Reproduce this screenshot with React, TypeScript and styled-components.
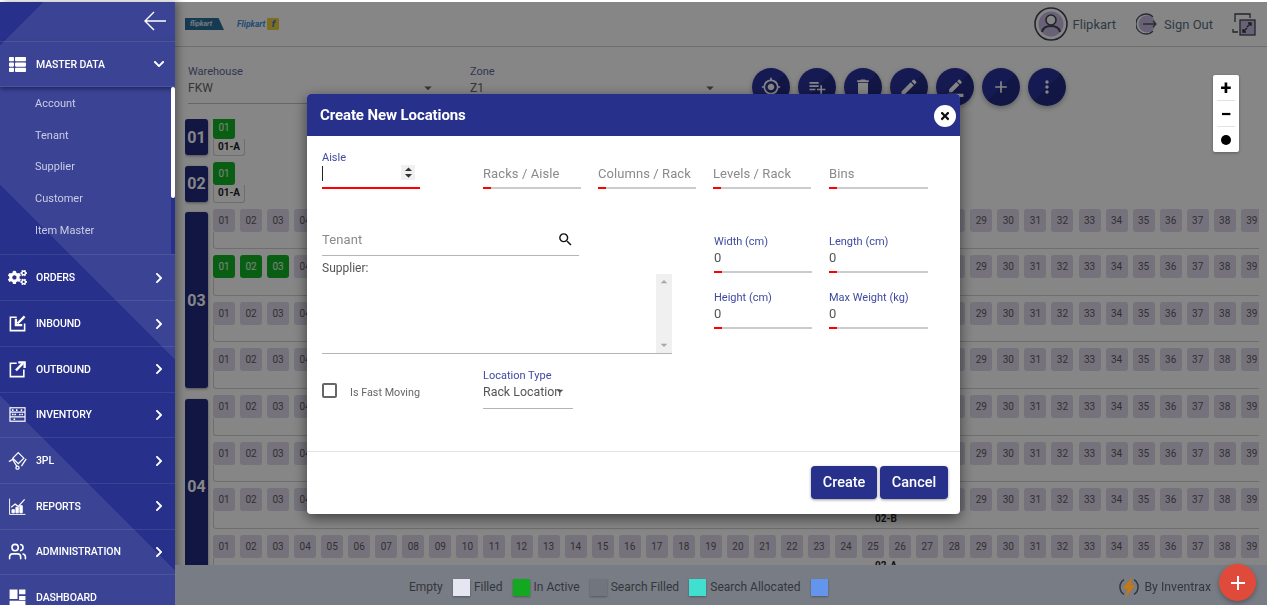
import React from "react";
import styled, { createGlobalStyle } from "styled-components";
import {
  MdAdd,
  MdBorderColor,
  MdDelete,
  MdEdit,
  MdGpsFixed,
  MdMoreVert,
  MdPlaylistAdd,
  MdSearch,
  MdArrowDropDown,
  MdArrowDropUp,
} from "react-icons/md";
import { FaChevronDown, FaChevronRight, FaCogs, FaThList, FaTimes } from "react-icons/fa";
import { LuUsers } from "react-icons/lu";

const GlobalStyle = createGlobalStyle`
  html, body {
    margin: 0;
    height: 100%;
    overflow: hidden;
    background: #fff;
    font-family: Roboto, "Liberation Sans", sans-serif;
  }
  * { box-sizing: border-box; }
`;

const Shell = styled.div`
  display: flex;
  width: 1267px;
  height: 605px;
  padding-top: 2px;
  overflow: hidden;
`;

/* ---------- sidebar ---------- */

const Sidebar = styled.aside`
  position: relative;
  z-index: 40;
  flex: 0 0 175px;
  height: 603px;
  overflow: hidden;
  color: #fff;
  box-shadow: 3px 0 8px rgba(0, 0, 0, 0.35);
  background:
    linear-gradient(135deg, #27308a 31px, transparent 31px),
    linear-gradient(45deg, #3b4494 148px, #27308a 148px, #27308a 297px, #3b4494 297px);
`;

const SideHead = styled.div`
  display: flex;
  justify-content: flex-end;
  align-items: center;
  height: 39.8px;
  padding-right: 8px;
  border-bottom: 1px solid rgba(255, 255, 255, 0.12);
`;

const MenuRow = styled.div<{ $open?: boolean }>`
  display: flex;
  align-items: center;
  height: 45.7px;
  padding: 0 10px 0 8px;
  border-bottom: 1px solid rgba(255, 255, 255, 0.09);
  box-shadow: ${(p) => (p.$open ? "0 2px 4px rgba(10, 12, 60, 0.55)" : "none")};
`;

const MenuIcon = styled.span`
  display: flex;
  justify-content: center;
  flex: 0 0 19px;
  margin-right: 9px;
`;

const MenuLabel = styled.span`
  flex: 1;
  font-size: 10.5px;
  font-weight: 500;
  letter-spacing: -0.1px;
`;

const SubMenu = styled.div`
  position: relative;
  height: 168px;
  padding-bottom: 10px;
  border-bottom: 1px solid rgba(255, 255, 255, 0.09);
`;

const SubItem = styled.div`
  display: flex;
  align-items: center;
  height: 31.7px;
  padding-left: 35px;
  font-size: 11px;
  color: #c9cce6;
`;

const SubTrack = styled.div`
  position: absolute;
  top: 0;
  right: 0;
  bottom: 0;
  width: 4px;
  background: #27308a;
`;

const SubThumb = styled.div`
  width: 4px;
  height: 111px;
  border-radius: 2px;
  background: #fff;
`;

/* ---------- main ---------- */

const Main = styled.main`
  display: flex;
  flex-direction: column;
  flex: 1;
  min-width: 0;
  height: 603px;
`;

const TopBar = styled.header`
  display: flex;
  align-items: center;
  flex: 0 0 45px;
  padding: 0 11px 0 10px;
  border-bottom: 1px solid #d4d4d4;
`;

const LogoBadge = styled.span`
  display: flex;
  align-items: center;
  width: 39px;
  height: 12px;
  padding-left: 5px;
  margin-right: 13px;
  font-size: 7px;
  font-style: italic;
  font-weight: 700;
  color: #dfe9ef;
  background: #2a6f9c;
  clip-path: polygon(0 0, 86% 0, 100% 100%, 0 100%);
`;

const LogoWord = styled.span`
  font-size: 8.5px;
  font-style: italic;
  font-weight: 700;
  color: #3f8ede;
`;

const LogoMark = styled.span`
  display: flex;
  align-items: center;
  justify-content: center;
  width: 12px;
  height: 12px;
  margin-left: 2px;
  border-radius: 1px;
  font-size: 9px;
  font-weight: 900;
  font-style: italic;
  color: #2a7fd6;
  background: #f2cf3c;
`;

const TopSpacer = styled.div`
  flex: 1;
`;

const TopText = styled.span`
  font-size: 13px;
  color: #5b6f84;
`;

const UserBlock = styled.div`
  display: flex;
  align-items: center;
  gap: 5px;
  margin-right: 20px;
`;

const SignOutBlock = styled.div`
  display: flex;
  align-items: center;
  gap: 6px;
  margin-right: 19px;
`;

const Toolbar = styled.section`
  display: flex;
  align-items: flex-start;
  gap: 31px;
  flex: 0 0 72px;
  padding: 18px 0 0 13px;
`;

const SelectField = styled.div`
  position: relative;
  width: 251px;
  height: 39px;
  border-bottom: 1px solid #c2c2c2;
`;

const SelectLabel = styled.div`
  font-size: 11px;
  line-height: 13px;
  color: #5f6899;
`;

const SelectValue = styled.div`
  font-size: 12px;
  line-height: 20px;
  color: #666;
`;

const SelectCaret = styled.span`
  position: absolute;
  right: 2px;
  top: 14px;
  display: flex;
  color: #666;
`;

const ActionGroup = styled.div`
  display: flex;
  gap: 8px;
  margin-top: 3px;
`;

const ActionButton = styled.button`
  display: flex;
  align-items: center;
  justify-content: center;
  width: 38px;
  height: 38px;
  padding: 0;
  border: 0;
  border-radius: 50%;
  color: #fff;
  background: linear-gradient(135deg, #2a329c 50%, #232a84 50%);
  box-shadow: 0 2px 5px rgba(0, 0, 0, 0.3);
`;

const ZoomControl = styled.div`
  position: absolute;
  z-index: 40;
  top: 75px;
  left: 1213px;
  display: flex;
  flex-direction: column;
  width: 26px;
  height: 77px;
  padding: 0 4px;
  border-radius: 2px;
  background: #fff;
  box-shadow: 0 1px 3px rgba(0, 0, 0, 0.3);
`;

const ZoomButton = styled.div<{ $last?: boolean }>`
  display: flex;
  align-items: center;
  justify-content: center;
  flex: 1;
  font-size: 20px;
  font-weight: 700;
  line-height: 1;
  color: #000;
  border-bottom: ${(p) => (p.$last ? "0" : "1px solid #e2e2e2")};
`;

const ZoomDot = styled.span`
  width: 10px;
  height: 10px;
  border-radius: 50%;
  background: #000;
`;

const Grid = styled.section`
  flex: 1;
  min-height: 0;
  margin: 0 8px 0 10px;
  overflow: hidden;
`;

const GridInner = styled.div`
  margin-top: -3.5px;
`;

const Aisle = styled.div`
  display: flex;
`;

const AisleLabel = styled.div`
  display: flex;
  align-items: center;
  justify-content: center;
  flex: 0 0 23px;
  margin: 3.5px 5px 7px 0;
  border-radius: 3px;
  font-size: 16px;
  font-weight: 700;
  color: #fff;
  background: #232a80;
  box-shadow: 0 1px 3px rgba(0, 0, 0, 0.4);
`;

const Racks = styled.div`
  display: flex;
  flex-direction: column;
`;

const RackRow = styled.div<{ $short?: boolean }>`
  display: flex;
  flex-direction: column;
  width: ${(p) => (p.$short ? "32px" : "1346px")};
  height: 40.6px;
  margin-bottom: 6px;
`;

const Cells = styled.div`
  display: flex;
  gap: 5.05px;
`;

const Cell = styled.div<{ $on?: boolean }>`
  display: flex;
  align-items: center;
  justify-content: center;
  flex: 0 0 22px;
  height: 23px;
  border-radius: 3px;
  font-size: 10px;
  color: ${(p) => (p.$on ? "#e4ffe8" : "#5f5a64")};
  background: ${(p) => (p.$on ? "#14b426" : "#dedaea")};
`;

const RackName = styled.div`
  flex: 1;
  border: 1px solid #d2d2d2;
  border-top: 0;
  border-radius: 0 0 3px 3px;
  font-size: 10px;
  font-weight: 700;
  line-height: 15px;
  text-align: center;
  color: #222;
`;

const Footer = styled.footer`
  position: relative;
  z-index: 40;
  display: flex;
  align-items: center;
  flex: 0 0 40px;
  padding: 4px 0 0 234px;
  background: #787c84;
  font-size: 12px;
  color: #33363c;
`;

const LegendText = styled.span`
  margin-right: 4px;
`;

const Swatch = styled.span<{ $color: string }>`
  flex: 0 0 17px;
  height: 17px;
  margin-right: 4px;
  margin-left: 6.2px;
  background: ${(p) => p.$color};
  box-shadow: 0 1px 2px rgba(0, 0, 0, 0.3);
`;

const Brand = styled.div`
  display: flex;
  align-items: center;
  gap: 5px;
  margin-left: auto;
  margin-right: 56px;
  font-size: 12.3px;
`;

const Fab = styled.button`
  position: absolute;
  right: 11px;
  top: -1px;
  display: flex;
  align-items: center;
  justify-content: center;
  width: 37px;
  height: 37px;
  padding: 0;
  border: 0;
  border-radius: 50%;
  color: #fff;
  background: #e04a3a;
  box-shadow: 0 2px 5px rgba(0, 0, 0, 0.3);
`;

/* ---------- dialog ---------- */

const DialogLayer = styled.div`
  position: fixed;
  z-index: 30;
  inset: 2px 0 0 0;
  display: flex;
  justify-content: center;
  align-items: flex-start;
  padding-top: 92px;
  background: rgba(0, 0, 0, 0.475);
`;

const Dialog = styled.div`
  position: relative;
  display: flex;
  flex-direction: column;
  width: 653px;
  height: 420px;
  border-radius: 4px;
  overflow: hidden;
  background: #fff;
  box-shadow: 0 4px 14px rgba(0, 0, 0, 0.55);
`;

const DialogHead = styled.div`
  display: flex;
  align-items: center;
  flex: 0 0 42px;
  padding: 0 15px 0 13px;
  font-size: 15px;
  font-weight: 700;
  letter-spacing: -0.1px;
  color: #fff;
  background: #27308a;
`;

const CloseButton = styled.button`
  position: absolute;
  top: 11px;
  right: 4px;
  display: flex;
  align-items: center;
  justify-content: center;
  width: 22px;
  height: 22px;
  padding: 0;
  border: 0;
  border-radius: 50%;
  color: #111;
  background: #fff;
`;

const DialogBody = styled.div`
  flex: 0 0 315px;
  padding: 15px 0 0 15px;
`;

const TopFields = styled.div`
  display: grid;
  grid-template-columns: 144px 98px 98px 99px 99px;
  column-gap: 17px;
`;

const Field = styled.div<{ $tick?: number; $wide?: boolean; $tall?: boolean }>`
  position: relative;
  width: ${(p) => (p.$wide ? "99px" : "98px")};
  height: ${(p) => (p.$tall ? "38px" : "37px")};
  padding-top: ${(p) => (p.$tall && p.$tick ? "1px" : "0")};
  background:
    linear-gradient(#f00, #f00) left bottom / ${(p) => p.$tick ?? 8}px 2px no-repeat,
    linear-gradient(#ccc, #ccc) left bottom / 100% 2px no-repeat;
`;

const FieldLabel = styled.div`
  font-size: 11px;
  line-height: 12px;
  color: #3f4aa0;
`;

const FieldValue = styled.div`
  font-size: 13px;
  line-height: 20px;
  color: #555;
`;

const TypeValue = styled.div`
  font-size: 12.4px;
  line-height: 20px;
  color: #555;
`;

const Placeholder = styled.div`
  padding-top: 15px;
  font-size: 13px;
  line-height: 16px;
  letter-spacing: 0.08px;
  color: #8a8a8a;
`;

const Caret = styled.span`
  display: block;
  width: 1px;
  height: 15px;
  margin-top: 2px;
  background: #222;
`;

const Spinner = styled.span`
  position: absolute;
  top: 14px;
  right: 5px;
  display: flex;
  flex-direction: column;
  align-items: center;
  justify-content: center;
  width: 14px;
  height: 15px;
  background: #f0f0f0;
  color: #333;
`;

const SpinIcon = styled.span`
  display: flex;
  height: 6px;
  align-items: center;
  justify-content: center;
`;

const MiddleRow = styled.div`
  display: flex;
  margin-top: 38px;
`;

const LeftColumn = styled.div`
  flex: 0 0 350px;
  margin-right: 42px;
`;

const TenantField = styled.div`
  display: flex;
  align-items: center;
  justify-content: space-between;
  width: 257px;
  height: 29px;
  padding: 0 5px 4px 0;
  font-size: 13px;
  letter-spacing: 0.1px;
  color: #8a8a8a;
  border-bottom: 1px solid #b5b5b5;
`;

const SupplierLabel = styled.div`
  margin-top: 6px;
  font-size: 12px;
  line-height: 12px;
  color: #555;
`;

const SupplierList = styled.div`
  display: flex;
  justify-content: flex-end;
  height: 80px;
  border-bottom: 1px solid #b5b5b5;
`;

const ListScroll = styled.div`
  display: flex;
  flex-direction: column;
  justify-content: space-between;
  align-items: center;
  width: 16px;
  color: #a8a8a8;
  background: #f0f0f0;
`;

const OptionRow = styled.div`
  display: flex;
  margin-top: 16px;
`;

const CheckArea = styled.label`
  display: flex;
  align-items: center;
  flex: 0 0 161px;
  padding-top: 5px;
  font-size: 10.8px;
  color: #666;
`;

const CheckBox = styled.span`
  flex: 0 0 15px;
  height: 15px;
  margin: -3px 13px 0 0;
  border: 2px solid #666;
  border-radius: 2px;
`;

const TypeField = styled.div`
  position: relative;
  width: 90px;
  height: 39px;
  border-bottom: 1px solid #b9b0b4;
`;

const TypeCaret = styled.span`
  position: absolute;
  right: 5px;
  top: 13px;
  display: flex;
  color: #555;
`;

const SizeGrid = styled.div`
  display: grid;
  grid-template-columns: 98px 99px;
  column-gap: 17px;
  row-gap: 19px;
  margin-top: 9px;
  align-self: flex-start;
`;

const DialogFoot = styled.div`
  display: flex;
  justify-content: flex-end;
  gap: 3px;
  flex: 1;
  padding: 14px 12px 0 0;
  border-top: 1px solid #e4e4e4;
`;

const DialogButton = styled.button<{ $width: number }>`
  width: ${(p) => p.$width}px;
  height: 33px;
  padding: 0;
  border: 0;
  border-radius: 4px;
  font-family: inherit;
  font-size: 14.5px;
  font-weight: 500;
  color: #fff;
  background: #27308a;
  box-shadow: 0 1px 3px rgba(0, 0, 0, 0.4);
`;

/* ---------- drawn icons ---------- */

const Line = (props: { children: React.ReactNode; size?: number; width?: number; color?: string }) => (
  <svg
    width={props.size ?? 19}
    height={props.size ?? 19}
    viewBox="0 0 24 24"
    fill="none"
    stroke={props.color ?? "#fff"}
    strokeWidth={props.width ?? 2}
  >
    {props.children}
  </svg>
);

const InboundIcon = () => (
  <Line>
    <path d="M11 4H3v17h18v-9" />
    <path d="M21 3l-9 9" strokeWidth={3} />
    <path d="M10 6v8h8" strokeWidth={3} />
  </Line>
);

const OutboundIcon = () => (
  <Line>
    <path d="M11 4H3v17h17v-9" />
    <path d="M10 13l9-9" strokeWidth={3} />
    <path d="M13 3h8v7" strokeWidth={3} />
  </Line>
);

const InventoryIcon = () => (
  <Line width={1.5}>
    <rect x="2.5" y="3.5" width="19" height="17" />
    <path d="M2.5 9h19M2.5 15h19" />
    <path d="M5 6.5h3M10 6.5h3M16 6.5h3M5 12h5M14 12h5M7 18h3" strokeDasharray="2 1" strokeWidth={2} />
  </Line>
);

const PlIcon = () => (
  <Line width={1.6}>
    <path d="M13 2l7 7-7 7-7-7z" />
    <path d="M1 13c3 0 3-3 5-2l5 8" />
    <path d="M23 10l-6 9" />
    <circle cx="12" cy="21" r="2" />
  </Line>
);

const ReportsIcon = () => (
  <Line width={1.2}>
    <path d="M2 2v20h20" />
    <path d="M4 13l5-4 4 3 8-9" strokeWidth={1.6} />
    <path d="M5 20v-4h3v4zM10 20v-7h3v7zM15 20v-9h3v9z" fill="#fff" />
  </Line>
);

const DashboardIcon = () => (
  <svg width="19" height="19" viewBox="0 0 24 24" fill="#fff">
    <path d="M2 2h10v12H2zM14 2h8v6h-8zM14 10h8v5h-8zM2 16h20v6H2z" />
  </svg>
);

const BackArrow = () => (
  <svg width="24" height="20" viewBox="0 0 24 20" fill="none" stroke="#fff" strokeWidth="1.4">
    <path d="M23 10H2M11 1l-9 9 9 9" />
  </svg>
);

const UserIcon = () => (
  <svg width="34" height="34" viewBox="0 0 34 34" fill="none" stroke="#3f4652" strokeWidth="1.6">
    <circle cx="17" cy="17" r="16" fill="#fff" />
    <circle cx="17" cy="17" r="12.5" fill="#c9b8e0" stroke="none" />
    <circle cx="17" cy="13" r="5" fill="#fff" />
    <path d="M8 25c1-5 5-6 9-6s8 1 9 6" strokeWidth="2" />
  </svg>
);

const SignOutIcon = () => (
  <svg width="22" height="24" viewBox="0 0 22 24" fill="none" stroke="#4d5663" strokeWidth="1.3">
    <path d="M17 5a10 10 0 1 0 0 14" />
    <circle cx="11" cy="12" r="8.5" fill="#c9b8e0" stroke="none" />
    <path d="M7 12h13M17 9l3 3-3 3" />
  </svg>
);

const ExpandIcon = () => (
  <svg width="24" height="24" viewBox="0 0 24 24" fill="none" stroke="#3f4652" strokeWidth="1.3">
    <path d="M3 10V2h15v4M1 17v3h5" />
    <rect x="8" y="8" width="15" height="15" fill="#c9b8e0" />
    <path d="M11 20l4-4M19 11l-4 4M11 17v3h3M16 11h3v3" stroke="#2f3540" />
  </svg>
);

const BoltIcon = () => (
  <svg width="20" height="20" viewBox="0 0 20 20" fill="none">
    <path d="M5 2.6a8.8 8.8 0 0 0 0 14.8M15 2.6a8.8 8.8 0 0 1 0 14.8" stroke="#33363c" strokeWidth="1.5" />
    <path d="M13.5 0L3.5 11.5h5L6.5 20 16.5 8h-5z" fill="#c8780f" />
  </svg>
);

/* ---------- data ---------- */

const numbers = Array.from({ length: 39 }, (_, i) => String(i + 1).padStart(2, "0"));

const aisles = [
  { id: "01", rows: [{ name: "01-A", on: 1, short: true }] },
  { id: "02", rows: [{ name: "01-A", on: 1, short: true }] },
  {
    id: "03",
    rows: [
      { name: "01-B", on: 0 },
      { name: "01-A", on: 3 },
      { name: "02-B", on: 0 },
      { name: "02-A", on: 0 },
    ],
  },
  {
    id: "04",
    rows: [
      { name: "01-B", on: 0 },
      { name: "01-A", on: 0 },
      { name: "02-B", on: 0 },
      { name: "02-A", on: 0 },
    ],
  },
];

const menu = [
  { label: "ORDERS", icon: <FaCogs size={19} /> },
  { label: "INBOUND", icon: <InboundIcon /> },
  { label: "OUTBOUND", icon: <OutboundIcon /> },
  { label: "INVENTORY", icon: <InventoryIcon /> },
  { label: "3PL", icon: <PlIcon /> },
  { label: "REPORTS", icon: <ReportsIcon /> },
  { label: "ADMINISTRATION", icon: <LuUsers size={19} /> },
  { label: "DASHBOARD", icon: <DashboardIcon /> },
];

const legend = [
  { label: "Empty", color: "#e6e6f2" },
  { label: "Filled", color: "#12a81f" },
  { label: "In Active", color: "#71767e" },
  { label: "Search Filled", color: "#40e0d0" },
  { label: "Search Allocated", color: "#6495ed" },
];

export default function App() {
  return (
    <>
      <GlobalStyle />
      <Shell>
        <Sidebar>
          <SideHead>
            <BackArrow />
          </SideHead>
          <MenuRow $open>
            <MenuIcon>
              <FaThList size={17} />
            </MenuIcon>
            <MenuLabel>MASTER DATA</MenuLabel>
            <FaChevronDown size={12} />
          </MenuRow>
          <SubMenu>
            {["Account", "Tenant", "Supplier", "Customer", "Item Master"].map((item) => (
              <SubItem key={item}>{item}</SubItem>
            ))}
            <SubTrack>
              <SubThumb />
            </SubTrack>
          </SubMenu>
          {menu.map((item) => (
            <MenuRow key={item.label}>
              <MenuIcon>{item.icon}</MenuIcon>
              <MenuLabel>{item.label}</MenuLabel>
              {item.label !== "DASHBOARD" && <FaChevronRight size={12} />}
            </MenuRow>
          ))}
        </Sidebar>

        <Main>
          <TopBar>
            <LogoBadge>flipkart</LogoBadge>
            <LogoWord>Flipkart</LogoWord>
            <LogoMark>f</LogoMark>
            <TopSpacer />
            <UserBlock>
              <UserIcon />
              <TopText>Flipkart</TopText>
            </UserBlock>
            <SignOutBlock>
              <SignOutIcon />
              <TopText>Sign Out</TopText>
            </SignOutBlock>
            <ExpandIcon />
          </TopBar>

          <Toolbar>
            <SelectField>
              <SelectLabel>Warehouse</SelectLabel>
              <SelectValue>FKW</SelectValue>
              <SelectCaret>
                <MdArrowDropDown size={18} />
              </SelectCaret>
            </SelectField>
            <SelectField>
              <SelectLabel>Zone</SelectLabel>
              <SelectValue>Z1</SelectValue>
              <SelectCaret>
                <MdArrowDropDown size={18} />
              </SelectCaret>
            </SelectField>
            <ActionGroup>
              <ActionButton><MdGpsFixed size={20} /></ActionButton>
              <ActionButton><MdPlaylistAdd size={20} /></ActionButton>
              <ActionButton><MdDelete size={20} /></ActionButton>
              <ActionButton><MdEdit size={20} /></ActionButton>
              <ActionButton><MdBorderColor size={19} /></ActionButton>
              <ActionButton><MdAdd size={20} /></ActionButton>
              <ActionButton><MdMoreVert size={20} /></ActionButton>
            </ActionGroup>
          </Toolbar>

          <Grid>
            <GridInner>
              {aisles.map((aisle) => (
                <Aisle key={aisle.id}>
                  <AisleLabel>{aisle.id}</AisleLabel>
                  <Racks>
                    {aisle.rows.map((row, r) => (
                      <RackRow key={r} $short={"short" in row}>
                        <Cells>
                          {("short" in row ? numbers.slice(0, 1) : numbers).map((n, i) => (
                            <Cell key={n} $on={i < row.on}>{n}</Cell>
                          ))}
                        </Cells>
                        <RackName>{row.name}</RackName>
                      </RackRow>
                    ))}
                  </Racks>
                </Aisle>
              ))}
            </GridInner>
          </Grid>

          <Footer>
            {legend.map((item) => (
              <React.Fragment key={item.label}>
                <LegendText>{item.label}</LegendText>
                <Swatch $color={item.color} />
              </React.Fragment>
            ))}
            <Brand>
              <BoltIcon />
              By Inventrax
            </Brand>
            <Fab><MdAdd size={24} /></Fab>
          </Footer>
        </Main>

        <ZoomControl>
          <ZoomButton>+</ZoomButton>
          <ZoomButton>−</ZoomButton>
          <ZoomButton $last><ZoomDot /></ZoomButton>
        </ZoomControl>

        <DialogLayer>
          <Dialog>
            <DialogHead>Create New Locations</DialogHead>
            <CloseButton><FaTimes size={12} /></CloseButton>
            <DialogBody>
              <TopFields>
                <Field $tick={98} $tall>
                  <FieldLabel>Aisle</FieldLabel>
                  <Caret />
                  <Spinner>
                    <SpinIcon><MdArrowDropUp size={17} /></SpinIcon>
                    <SpinIcon><MdArrowDropDown size={17} /></SpinIcon>
                  </Spinner>
                </Field>
                <Field $tall><Placeholder>Racks / Aisle</Placeholder></Field>
                <Field $tall><Placeholder>Columns / Rack</Placeholder></Field>
                <Field $tall><Placeholder>Levels / Rack</Placeholder></Field>
                <Field $tall $wide><Placeholder>Bins</Placeholder></Field>
              </TopFields>
              <MiddleRow>
                <LeftColumn>
                  <TenantField>
                    Tenant
                    <MdSearch size={17} color="#111" />
                  </TenantField>
                  <SupplierLabel>Supplier:</SupplierLabel>
                  <SupplierList>
                    <ListScroll>
                      <MdArrowDropUp size={16} />
                      <MdArrowDropDown size={16} />
                    </ListScroll>
                  </SupplierList>
                  <OptionRow>
                    <CheckArea>
                      <CheckBox />
                      Is Fast Moving
                    </CheckArea>
                    <TypeField>
                      <FieldLabel>Location Type</FieldLabel>
                      <TypeValue>Rack Location</TypeValue>
                      <TypeCaret><MdArrowDropDown size={16} /></TypeCaret>
                    </TypeField>
                  </OptionRow>
                </LeftColumn>
                <SizeGrid>
                  {["Width (cm)", "Length (cm)", "Height (cm)", "Max Weight (kg)"].map((label, i) => (
                    <Field key={label} $wide={i % 2 === 1}>
                      <FieldLabel>{label}</FieldLabel>
                      <FieldValue>0</FieldValue>
                    </Field>
                  ))}
                </SizeGrid>
              </MiddleRow>
            </DialogBody>
            <DialogFoot>
              <DialogButton $width={66}>Create</DialogButton>
              <DialogButton $width={68}>Cancel</DialogButton>
            </DialogFoot>
          </Dialog>
        </DialogLayer>
      </Shell>
    </>
  );
}
